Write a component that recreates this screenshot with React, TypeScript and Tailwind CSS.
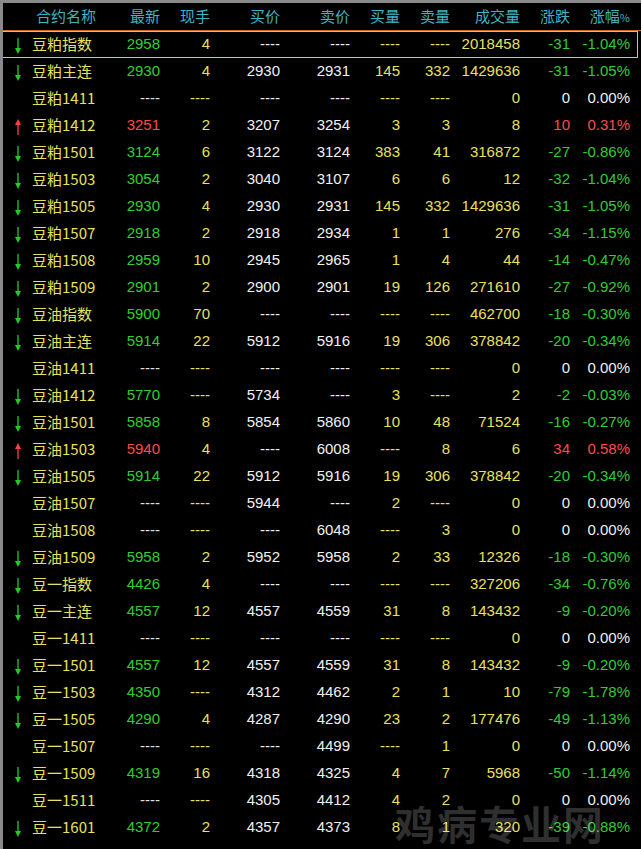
import React from "react";

type R = [string, string, string, string, string, string, string, string, string, string, string];
const rows: R[] = [
["d","豆粕指数","2958","4","----","----","----","----","2018458","-31","-1.04%"],
["d","豆粕主连","2930","4","2930","2931","145","332","1429636","-31","-1.05%"],
["","豆粕1411","----","----","----","----","----","----","0","0","0.00%"],
["u","豆粕1412","3251","2","3207","3254","3","3","8","10","0.31%"],
["d","豆粕1501","3124","6","3122","3124","383","41","316872","-27","-0.86%"],
["d","豆粕1503","3054","2","3040","3107","6","6","12","-32","-1.04%"],
["d","豆粕1505","2930","4","2930","2931","145","332","1429636","-31","-1.05%"],
["d","豆粕1507","2918","2","2918","2934","1","1","276","-34","-1.15%"],
["d","豆粕1508","2959","10","2945","2965","1","4","44","-14","-0.47%"],
["d","豆粕1509","2901","2","2900","2901","19","126","271610","-27","-0.92%"],
["d","豆油指数","5900","70","----","----","----","----","462700","-18","-0.30%"],
["d","豆油主连","5914","22","5912","5916","19","306","378842","-20","-0.34%"],
["","豆油1411","----","----","----","----","----","----","0","0","0.00%"],
["d","豆油1412","5770","----","5734","----","3","----","2","-2","-0.03%"],
["d","豆油1501","5858","8","5854","5860","10","48","71524","-16","-0.27%"],
["u","豆油1503","5940","4","----","6008","----","8","6","34","0.58%"],
["d","豆油1505","5914","22","5912","5916","19","306","378842","-20","-0.34%"],
["","豆油1507","----","----","5944","----","2","----","0","0","0.00%"],
["","豆油1508","----","----","----","6048","----","3","0","0","0.00%"],
["d","豆油1509","5958","2","5952","5958","2","33","12326","-18","-0.30%"],
["d","豆一指数","4426","4","----","----","----","----","327206","-34","-0.76%"],
["d","豆一主连","4557","12","4557","4559","31","8","143432","-9","-0.20%"],
["","豆一1411","----","----","----","----","----","----","0","0","0.00%"],
["d","豆一1501","4557","12","4557","4559","31","8","143432","-9","-0.20%"],
["d","豆一1503","4350","----","4312","4462","2","1","10","-79","-1.78%"],
["d","豆一1505","4290","4","4287","4290","23","2","177476","-49","-1.13%"],
["","豆一1507","----","----","----","4499","----","1","0","0","0.00%"],
["d","豆一1509","4319","16","4318","4325","4","7","5968","-50","-1.14%"],
["","豆一1511","----","----","4305","4412","4","2","0","0","0.00%"],
["d","豆一1601","4372","2","4357","4373","8","1","320","-39","-0.88%"],
];

const widths = ["w-[50px]","w-[50px]","w-[70px]","w-[70px]","w-[50px]","w-[50px]","w-[70px]","w-[50px]","w-[60px]"];
const heads = ["最新","现手","买价","卖价","买量","卖量","成交量","涨跌","涨幅%"];
const font = { fontFamily: '"Liberation Sans","Noto Sans CJK SC",sans-serif' };
const cjk = { fontFamily: '"Noto Sans CJK SC",sans-serif' };

function Arrow({ dir }: { dir: string }) {
  if (!dir) return <span className="w-[12px]" />;
  const c = dir === "u" ? "#ff4040" : "#22cc22";
  return (
    <svg width="12" height="18" viewBox="0 0 12 18" className="mt-[2px]">
      {dir === "d" ? (
        <g stroke={c} fill={c}><line x1="6" y1="1" x2="6" y2="13" strokeWidth="1.3" /><path d="M3 11 L6 17 L9 11 Z" stroke="none" /></g>
      ) : (
        <g stroke={c} fill={c}><line x1="6" y1="5" x2="6" y2="17" strokeWidth="1.3" /><path d="M3 7 L6 1 L9 7 Z" stroke="none" /></g>
      )}
    </svg>
  );
}

function color(i: number, r: R) {
  const chg = r[9];
  const up = !chg.startsWith("-") && chg !== "0";
  const dn = chg.startsWith("-");
  if (i === 0) return r[2] === "----" ? "text-[#e0e0e0]" : up ? "text-[#ff4a4a]" : "text-[#33cc33]";
  if (i === 1) return "text-[#e8e060]";
  if (i === 2 || i === 3) return "text-[#f0f0f0]";
  if (i >= 4 && i <= 6) return "text-[#e8e060]";
  return up ? "text-[#ff4a4a]" : dn ? "text-[#33cc33]" : "text-[#f0f0f0]";
}

export default function App() {
  return (
    <div className="w-[641px] h-[849px] bg-black border-t-[3px] border-l-[3px] border-[#8a8a8a] overflow-hidden relative text-[15px]" style={font}>
      <div className="flex h-[28px] items-center border-b border-[#c86a20]">
        <div className="w-[107px] pl-[33px] text-[#3fb4c4]" style={cjk}>合约名称</div>
        {heads.map((h, i) => (
          <div key={i} className={`${widths[i]} text-right text-[#3fb4c4]`} style={cjk}>
            {i === 8 ? <>涨幅<span className="text-[11px]">%</span></> : h}
          </div>
        ))}
      </div>
      {rows.map((r, k) => (
        <div key={k} className={`flex h-[27px] items-center ${k === 0 ? "border border-[#e0c060] -ml-[1px] mr-[3px]" : ""}`}>
          <div className="w-[107px] flex items-center">
            <div className="w-[24px] flex justify-center pl-[6px]"><Arrow dir={r[0]} /></div>
            <span className="pl-[5px] text-[#e8e060] text-[15px]" style={cjk}>{r[1]}</span>
          </div>
          {r.slice(2).map((v, i) => (
            <div key={i} className={`${widths[i]} text-right ${color(i, r)}`}>{v}</div>
          ))}
        </div>
      ))}
      <div className="absolute left-[392px] top-[790px] text-[40px] font-bold text-[#ffffff30] tracking-[2px] pointer-events-none" style={cjk}>鸡病专业网</div>
    </div>
  );
}
